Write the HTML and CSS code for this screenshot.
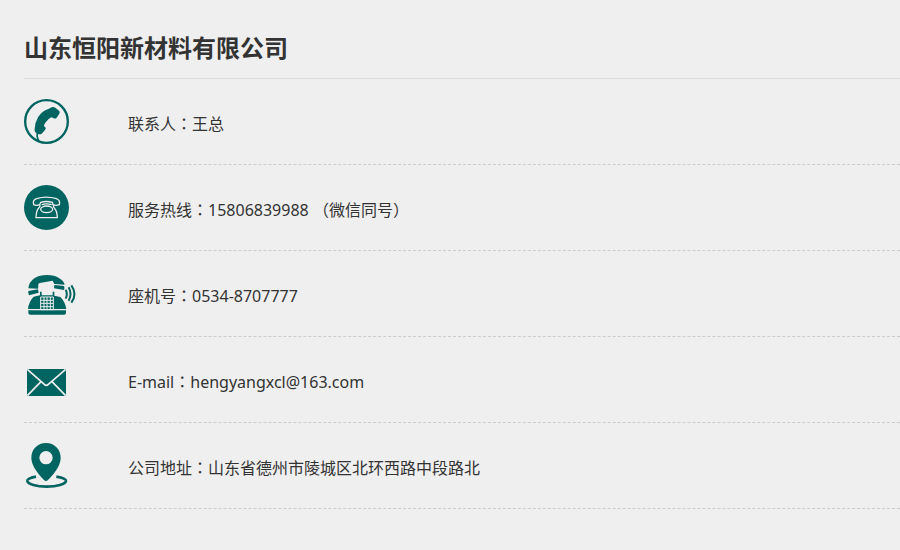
FILE: index.html
```html
<!DOCTYPE html>
<html lang="zh-CN">
<head>
    <meta charset="UTF-8">
    <meta name="viewport" content="width=device-width, initial-scale=1.0">
    <title>山东恒阳新材料有限公司</title>
    <link rel="stylesheet" href="styles.css">
</head>
<body>
    <div class="contact">
        <h1 class="contact-title">山东恒阳新材料有限公司</h1>
        <ul class="contact-list">
            <li class="contact-item">
                <!-- 听筒 -->
                <svg class="icon" viewBox="30 27 168 135" aria-hidden="true">
                    <circle class="line" cx="97.500" cy="94.500" r="64" stroke-width="7"/>
                    <path d="M109 54 Q116 48 124 53 L136 63 Q139 67 135 73 L128 83 Q123 88 118 84 L112 82 Q101 87 94 98 Q89 105 90 109 L94 112 Q97 116 93 120 L83 131 Q78 134 72 132 L64 127 Q61 123 62 116 Q63 98 72 82 Q84 62 103 57 Z"/>
                    <path class="line" d="M70 128 Q67 147 79 157" stroke-width="5"/>
                </svg>
                <p class="text">联系人<span class="mark" lang="zh-TW">：</span>王总</p>
            </li>
            <li class="contact-item">
                <!-- 热线 -->
                <svg class="icon" viewBox="30 21 168 135" aria-hidden="true">
                    <circle cx="97.500" cy="88.500" r="67.500"/>
                    <g class="light" stroke-width="4">
                        <path d="M59 80 Q55 66 68 62 Q97 53 127 62 Q140 67 136 80 Q126 84 117 80 L115 73 Q97 68 80 73 L77 80 Q68 84 59 80 Z"/>
                        <path d="M78 81 Q79 87 72 93 Q67 99 66 119 H130 Q129 99 123 93 Q117 87 118 81"/>
                        <path d="M83 80 Q97 75 113 80"/>
                        <ellipse cx="98" cy="94" rx="18" ry="10"/>
                    </g>
                </svg>
                <p class="text">服务热线<span class="mark" lang="zh-TW">：</span>15806839988 <span class="mark" lang="zh-TW">（</span>微信同号<span class="mark" lang="zh-TW">）</span></p>
            </li>
            <li class="contact-item">
                <!-- 座机 -->
                <svg class="icon" viewBox="30 18 168 135" aria-hidden="true">
                    <path d="M43 70 Q45 51 61 40 Q77 30 99 30 Q121 30 136 40 Q150 49 152 59 L121 57 L116 47 L77 54 Q71 56 73 65 L72 71 Z"/>
                    <path d="M43 78 L72 73 L74 83 L45 91 Q42 86 43 78 Z"/>
                    <path d="M121 60 L150 63 Q153 69 150 75 L120 70 Z"/>
                    <path d="M59 95 L78 91 V80 H83 V91 H116 V80 H121 V92 L139 96 Q153 109 157 132 H42 Q44 110 59 95 Z"/>
                    <path d="M43 136 H156 V144 Q156 149 150 149 H49 Q43 149 43 144 Z"/>
                    <g class="light" stroke-width="3">
                        <path d="M80 96 H118 V134 H80 Z"/>
                        <path d="M90 96 V134 M99 96 V134 M109 96 V134 M80 106 H118 M80 115 H118 M80 125 H118"/>
                    </g>
                    <path class="line" d="M155 74 Q162 87 155 101 M164 67 Q175 87 164 107 M172 61 Q191 87 172 113" stroke-width="6"/>
                </svg>
                <p class="text">座机号<span class="mark" lang="zh-TW">：</span>0534-8707777</p>
            </li>
            <li class="contact-item">
                <!-- 信封 -->
                <svg class="icon" viewBox="30 6 168 135" aria-hidden="true">
                    <path d="M39 42 H156 V123 H39 Z"/>
                    <path class="light" d="M40 43 L91 88 Q97 94 103 88 L155 43 M40 122 L81 80 M155 122 L114 80" stroke-width="5"/>
                </svg>
                <p class="text">E-mail<span class="mark" lang="zh-TW">：</span>hengyangxcl@163.com</p>
            </li>
            <li class="contact-item">
                <!-- 地址 -->
                <svg class="icon" viewBox="30 24 168 135" aria-hidden="true">
                    <path fill-rule="evenodd" d="M96 24 C71 24 52 43 52 68 C52 87 66 110 90 135 Q96 141 102 135 C127 110 140 87 140 68 C140 43 121 24 96 24 Z M96 48 A20 20 0 1 1 96 88 A20 20 0 1 1 96 48 Z"/>
                    <path class="line" d="M66 125 Q39 130 40 138 C42 148 67 155 98 155 C129 155 154 148 156 138 Q157 130 127 125" stroke-width="8"/>
                </svg>
                <p class="text">公司地址<span class="mark" lang="zh-TW">：</span>山东省德州市陵城区北环西路中段路北</p>
            </li>
        </ul>
    </div>
</body>
</html>
```
FILE: styles.css
```css
body {
    margin: 0;
    background-color: #efefef;
    color: #333;
    font-family: "Noto Sans", "Noto Sans CJK SC", sans-serif;
    font-size: 16px;
}

.contact {
    padding: 18px 0 24px 24px;
}

.contact-title {
    margin: 0;
    border-bottom: 1px solid #ddd;
    font-size: 24px;
    line-height: 60px;
}

.contact-list {
    margin: 0;
    padding: 0;
    list-style: none;
}

.contact-item {
    display: grid;
    grid-template-columns: 56px 1fr;
    column-gap: 48px;
    padding: 20px 0;
    border-bottom: 1px dashed #ccc;
}

.icon {
    display: block;
    width: 56px;
    height: 45px;
    fill: #006460;
}

.icon .line {
    fill: none;
    stroke: #006460;
}

.icon .light {
    fill: none;
    stroke: #efefef;
}

.text {
    margin: 0;
    padding-top: 4px;
    line-height: 40px;
}

/* 标点居中 */
.mark {
    font-family: "Noto Sans CJK TC", sans-serif;
}
```
